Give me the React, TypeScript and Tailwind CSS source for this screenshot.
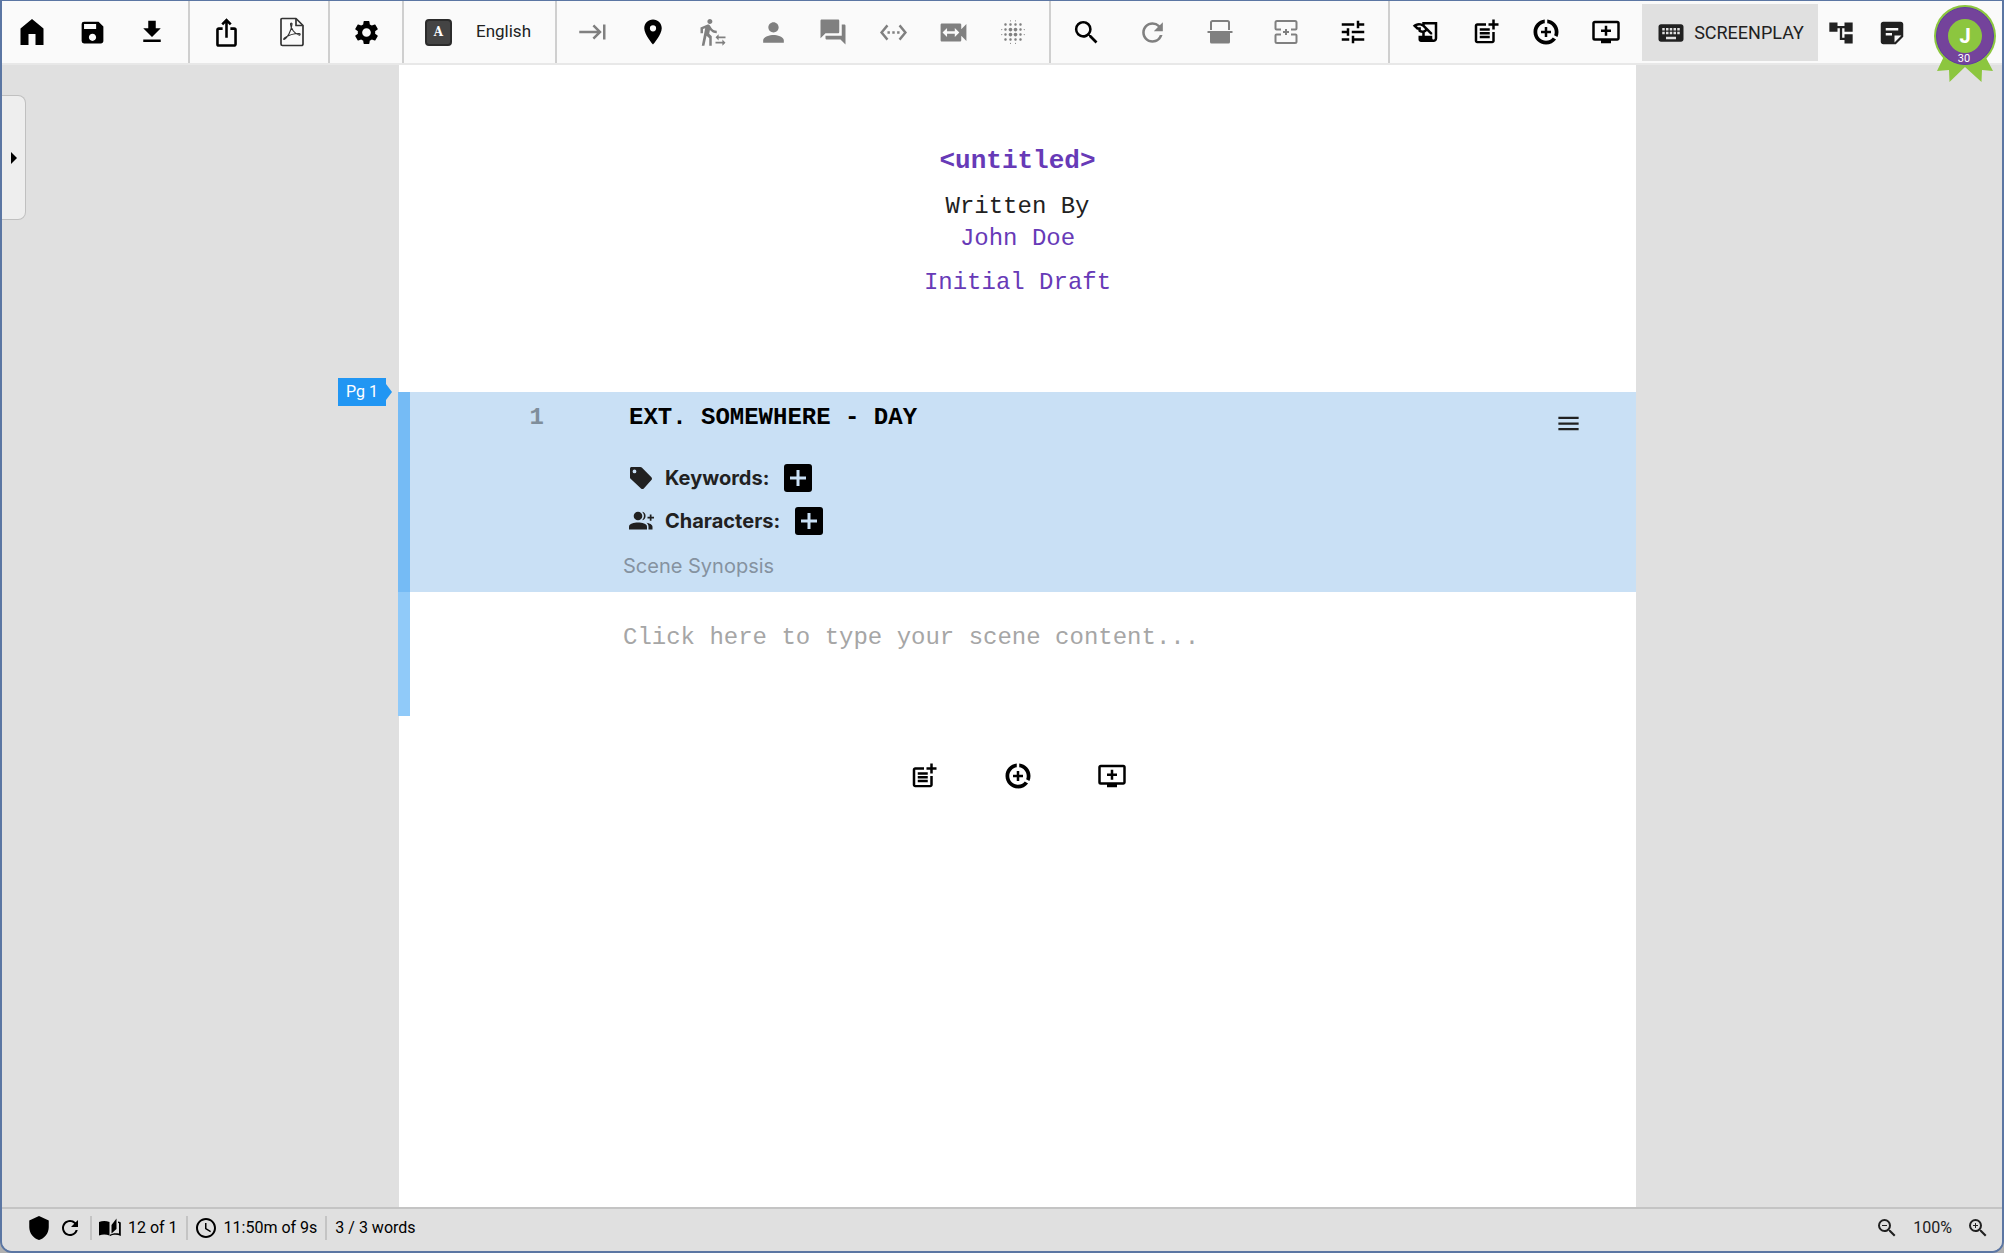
import type { ReactNode } from "react";
import {
    MdAccountTree,
    MdAddToQueue,
    MdBlurOn,
    MdDataSaverOn,
    MdDownload,
    MdForum,
    MdHistoryEdu,
    MdIosShare,
    MdKeyboard,
    MdKeyboardTab,
    MdMenu,
    MdPerson,
    MdPlace,
    MdPostAdd,
    MdRefresh,
    MdSave,
    MdSchedule,
    MdSearch,
    MdSettings,
    MdSettingsEthernet,
    MdShield,
    MdStickyNote2,
    MdSwitchVideo,
    MdTransferWithinAStation,
    MdTune,
    MdZoomIn,
    MdZoomOut,
} from "react-icons/md";

const HomeIcon = () => (
    <svg viewBox="0 0 28 28" className="size-7" fill="currentColor">
        <path d="M14 1 25.500 10.500V27h-8V16h-7v11h-8V10.500Z" />
    </svg>
);

const PdfIcon = () => (
    <svg viewBox="0 0 28 30" className="h-[30px] w-7" fill="none" stroke="#333" strokeWidth="1.700" strokeLinejoin="round">
        <path d="M4 1.500h14l7 7V27a1.500 1.500 0 0 1-1.500 1.500h-19A1.500 1.500 0 0 1 3 27V2.500a1 1 0 0 1 1-1Z" />
        <path d="M18 2v6.500h6.500" />
        <path strokeWidth="1.200" d="M6 22.500c3-1.200 7.500-8.500 8-15.500.1-1.200-1.500-1.200-1.500 0 .2 5 4.500 10 8.500 11 1.500.3 1.500-1.500 0-1.500-5 0-11 2-14.500 4.500-1 .8-.8 1.600-.5 1.500Z" />
    </svg>
);

const LanguageIcon = () => (
    <span className="flex size-[27px] items-center justify-center rounded border-2 border-[#2b2b2b] bg-[#444] font-['DejaVu_Serif',serif] text-xs font-bold leading-none text-white">
        A
    </span>
);

const SynopsisIcon = () => (
    <svg viewBox="0 0 26 26" className="size-[26px]" fill="none" stroke="currentColor" strokeWidth="2">
        <path d="M4 11V3.500A1.500 1.500 0 0 1 5.500 2h15A1.500 1.500 0 0 1 22 3.500V11" />
        <path d="M.5 13h25" />
        <path fill="currentColor" stroke="none" d="M3 14h20v9a1.500 1.500 0 0 1-1.500 1.500h-17A1.500 1.500 0 0 1 3 23Z" />
    </svg>
);

const PageBreakIcon = () => (
    <svg viewBox="0 0 26 26" className="size-[26px]" fill="none" stroke="currentColor" strokeWidth="2">
        <path d="M8 10.500H3.500a1 1 0 0 1-1-1V3.500A1.500 1.500 0 0 1 4 2h18a1.500 1.500 0 0 1 1.500 1.500v6a1 1 0 0 1-1 1H18" />
        <path d="M8 15.500H3.500a1 1 0 0 0-1 1v6A1.500 1.500 0 0 0 4 24h18a1.500 1.500 0 0 0 1.500-1.500v-6a1 1 0 0 0-1-1H18" />
        <path d="M13 10v6M10 13h6" />
    </svg>
);

const TagIcon = () => (
    <svg viewBox="0 0 24 24" className="size-6" fill="currentColor">
        <path fillRule="evenodd" d="M2.500 1h8.800c.6 0 1.100.2 1.500.6l9.600 9.600c.8.800.8 2 0 2.800l-7.600 8.400c-.8.800-2 .8-2.800 0L1.600 12.800A2 2 0 0 1 1 11.400V2.500C1 1.700 1.700 1 2.500 1ZM5.500 3.500a1.900 1.900 0 1 0 0 3.800 1.900 1.900 0 0 0 0-3.800Z" />
    </svg>
);

const PeopleAddIcon = () => (
    <svg viewBox="0 0 26 20" className="h-5 w-[26px]" fill="currentColor">
        <circle cx="9" cy="5" r="4.300" />
        <path d="M0 18.500v-2.800C0 12.500 5 11.500 9 11.500s9 1 9 4.200v2.800Z" />
        <path d="M13.200.8a4.300 4.300 0 0 1 0 8.400 6.500 6.500 0 0 0 0-8.400ZM17.500 11.700c3 .6 6 1.700 6 4v2.800h-4v-2.800c0-1.700-.8-3-2-4Z" />
        <path d="M20.800 3.500h1.700v2.300H25v1.700h-2.500v2.300h-1.700V7.500h-2.300V5.800h2.300Z" />
    </svg>
);

const BookIcon = () => (
    <svg viewBox="0 0 24 20" className="h-5 w-6" fill="currentColor">
        <path d="M1 4c3.500-1.500 7-1.500 10.500 0v13.500C8 16 4.500 16 1 17.500Z" />
        <path d="M13.500 7 18.500.5V11l-5 4.500Z" />
        <path d="M20 3.500c1 .2 2 .5 2.800.9V18c-3.500-1.500-7.300-1.700-11 .3v-1.500c2.600-1.700 6-2 9.200-1.300V5.300l-1-.3Z" />
    </svg>
);

const Badge = () => (
    <svg viewBox="0 0 64 80" className="h-20 w-16" role="img" aria-label="J, 30">
        <path fill="#8cc63f" d="M13 48 4 67l12-1 .500 12L32 63l16.500 15 .500-12 11 1-10-19Z" />
        <circle cx="32" cy="32" r="31" fill="#8cc63f" />
        <circle cx="32" cy="32" r="28.500" fill="#74439b" stroke="#5f3ba0" />
        <circle cx="32" cy="32" r="17" fill="#8cc63f" />
        <text x="32" y="39" textAnchor="middle" fontSize="20" fontWeight="800" fill="#fff">J</text>
        <text x="31" y="58" textAnchor="middle" fontSize="11" fill="#fff">30</text>
    </svg>
);

const ToolButton = ({ label, wide, disabled, children }: { label: string; wide?: boolean; disabled?: boolean; children: ReactNode }) => (
    <button
        type="button"
        aria-label={label}
        disabled={disabled}
        className={`flex h-full shrink-0 items-center justify-center text-black disabled:text-[#808080] ${wide ? "w-[66px]" : "w-[60px]"}`}
    >
        {children}
    </button>
);

const ToolGroup = ({ className, children }: { className: string; children: ReactNode }) => (
    <div className={`flex h-full shrink-0 items-center border-r-2 border-[#cfcfcf] ${className}`}>{children}</div>
);

const Toolbar = () => (
    <header className="flex h-16 shrink-0 items-center border-b-2 border-[#e8e8e8] bg-[#fafafa]">
        <ToolGroup className="pr-1.5">
            <ToolButton label="Home"><HomeIcon /></ToolButton>
            <ToolButton label="Save"><MdSave size={29} /></ToolButton>
            <ToolButton label="Download"><MdDownload size={30} /></ToolButton>
        </ToolGroup>
        <ToolGroup className="px-[3px]">
            <ToolButton label="Export" wide><MdIosShare size={31} /></ToolButton>
            <ToolButton label="Export to PDF" wide><PdfIcon /></ToolButton>
        </ToolGroup>
        <ToolGroup className="px-[3px]">
            <ToolButton label="Settings" wide><MdSettings size={29} /></ToolButton>
        </ToolGroup>
        <ToolGroup className="w-[153px]">
            <button type="button" className="flex h-full w-full items-center gap-6 pl-[21px] text-[17px] text-[#212121]">
                <LanguageIcon />
                English
            </button>
        </ToolGroup>
        <ToolGroup className="px-1.5">
            <ToolButton label="Tab" disabled><MdKeyboardTab size={30} /></ToolButton>
            <ToolButton label="Scene heading"><MdPlace size={30} /></ToolButton>
            <ToolButton label="Action" disabled><MdTransferWithinAStation size={30} /></ToolButton>
            <ToolButton label="Character" disabled><MdPerson size={31} /></ToolButton>
            <ToolButton label="Dialogue" disabled><MdForum size={30} /></ToolButton>
            <ToolButton label="Parenthetical" disabled><MdSettingsEthernet size={29} /></ToolButton>
            <ToolButton label="Shot" disabled><MdSwitchVideo size={31} /></ToolButton>
            <ToolButton label="Transition" disabled><MdBlurOn size={30} /></ToolButton>
        </ToolGroup>
        <ToolGroup className="w-[339px] justify-between px-0.5">
            <ToolButton label="Search" wide><MdSearch size={31} /></ToolButton>
            <ToolButton label="Refresh" wide disabled><MdRefresh size={31} /></ToolButton>
            <ToolButton label="Synopsis" wide disabled><SynopsisIcon /></ToolButton>
            <ToolButton label="Page break" wide disabled><PageBreakIcon /></ToolButton>
            <ToolButton label="Options" wide><MdTune size={30} /></ToolButton>
        </ToolGroup>
        <div className="flex h-full items-center pl-1.5">
            <ToolButton label="Scriptalay"><MdHistoryEdu size={30} /></ToolButton>
            <ToolButton label="Add scene"><MdPostAdd size={30} /></ToolButton>
            <ToolButton label="Add act break"><MdDataSaverOn size={30} /></ToolButton>
            <ToolButton label="Add episode break"><MdAddToQueue size={30} /></ToolButton>
        </div>
        <nav className="ml-auto flex shrink-0 items-center self-start pt-[3px] text-[#212121]">
            <button type="button" aria-current="page" className="flex h-[57px] w-44 items-center justify-center gap-2 bg-[#e0e0e0] text-lg">
                <MdKeyboard size={30} />
                SCREENPLAY
            </button>
            <button type="button" aria-label="Structure" className="flex h-14 w-[46px] items-center justify-center"><MdAccountTree size={28} /></button>
            <button type="button" aria-label="Notebook" className="flex h-14 w-14 items-center justify-center"><MdStickyNote2 size={30} /></button>
            <button type="button" className="relative z-10 ml-[13px] mr-[5px] h-14 self-start"><Badge /></button>
        </nav>
    </header>
);

const AddButton = ({ label }: { label: string }) => (
    <button type="button" aria-label={label} className="ml-[7px] flex size-7 items-center justify-center rounded-[3px] bg-black text-[#c9e0f5]">
        <svg viewBox="0 0 16 16" className="size-4" stroke="currentColor" strokeWidth="3"><path d="M8 0v16M0 8h16" /></svg>
    </button>
);

const TitlePage = () => (
    <section className="flex flex-col items-center pb-[93px] pt-20 font-['Liberation_Mono',monospace] text-2xl leading-8 text-[#673ab7]">
        <h1 className="text-[26px] font-bold">&lt;untitled&gt;</h1>
        <p className="mt-3.5 text-[#212121]">Written By</p>
        <p>John Doe</p>
        <p className="mt-3">Initial Draft</p>
    </section>
);

const Scene = () => (
    <section className="relative -ml-px">
        <div className="absolute right-full top-[-14px] mr-1.5 flex items-center">
            <span className="flex h-7 w-12 items-center justify-center bg-[#2196f3] text-base text-white">Pg 1</span>
            <svg viewBox="0 0 6 16" className="h-4 w-1.5" fill="#2196f3"><path d="M0 0 6 8 0 16Z" /></svg>
        </div>
        <div className="flex h-[200px] border-l-[12px] border-[#75bbf5] bg-[#c9e0f5]">
            <div className="w-[134px] pt-2.5 text-right font-['Liberation_Mono',monospace] text-2xl font-bold leading-8 text-[#7f8e9b]">1</div>
            <div className="flex grow flex-col pl-[79px]">
                <input
                    aria-label="Scene heading"
                    defaultValue="EXT. SOMEWHERE - DAY"
                    className="mt-2.5 h-8 w-full bg-transparent pl-1.5 font-['Liberation_Mono',monospace] text-2xl font-bold text-black outline-none"
                />
                <div className="mt-[22px] flex h-[43px] items-center gap-2 pl-1.5 font-['Inter',sans-serif] text-xl font-bold text-[#212121]">
                    <span className="flex w-7"><TagIcon /></span>
                    Keywords:
                    <AddButton label="Add keyword" />
                </div>
                <div className="flex h-[43px] items-center gap-2 pl-1.5 font-['Inter',sans-serif] text-xl font-bold text-[#212121]">
                    <span className="flex w-7"><PeopleAddIcon /></span>
                    Characters:
                    <AddButton label="Add character" />
                </div>
                <input
                    aria-label="Scene synopsis"
                    placeholder="Scene Synopsis"
                    className="mt-1.5 h-9 w-full bg-transparent font-['Inter',sans-serif] text-xl outline-none placeholder:text-[#8592a0]"
                />
            </div>
            <button type="button" aria-label="Scene menu" className="mr-[53px] mt-4 flex size-[30px] items-center justify-center text-[#212121]">
                <MdMenu size={27} />
            </button>
        </div>
        <div className="flex border-l-[12px] border-[#90caf9]">
            <textarea
                aria-label="Scene content"
                placeholder="Click here to type your scene content..."
                className="ml-[213px] h-[124px] grow resize-none bg-transparent pt-[30px] font-['Liberation_Mono',monospace] text-2xl leading-8 outline-none placeholder:text-[#a6a6a6]"
            />
        </div>
    </section>
);

const StatusBar = () => (
    <footer className="flex h-11 shrink-0 items-center border-t-2 border-[#c4c4c4] bg-[#e0e0e0] pb-1 text-base text-black">
        <button type="button" aria-label="Vault" className="ml-6"><MdShield size={26} /></button>
        <button type="button" aria-label="Refresh statistics" className="ml-1.5"><MdRefresh size={24} /></button>
        <span className="ml-2 flex h-6 items-center gap-1.5 border-l-2 border-[#c4c4c4] pl-1.5">
            <BookIcon />
            12 of 1
        </span>
        <span className="ml-2 flex h-6 items-center gap-1.5 border-l-2 border-[#c4c4c4] pl-1.5">
            <MdSchedule size={24} />
            11:50m of 9s
        </span>
        <span className="ml-2 flex h-6 items-center border-l-2 border-[#c4c4c4] pl-2">3 / 3 words</span>
        <div className="ml-auto mr-3 flex items-center gap-3.5 text-[#212121]">
            <button type="button" aria-label="Zoom out"><MdZoomOut size={24} /></button>
            100%
            <button type="button" aria-label="Zoom in"><MdZoomIn size={24} /></button>
        </div>
    </footer>
);

export default function App() {
    return (
        <div className="h-screen bg-[#b0b0b0] font-['Roboto',sans-serif]">
            <div className="flex h-full flex-col overflow-hidden rounded-b-xl border-2 border-t border-[#5b76a3] bg-[#e0e0e0]">
                <Toolbar />
                <main className="grid grow grid-cols-[397fr_1237fr_366fr]">
                    <aside className="pt-[30px]">
                        <button
                            type="button"
                            aria-label="Show side panel"
                            className="flex h-[125px] w-6 items-center justify-center rounded-r-lg border border-l-0 border-[#c0c0c0] bg-[#eee]"
                        >
                            <svg viewBox="0 0 6 12" className="h-3 w-1.5"><path d="M0 0 6 6 0 12Z" /></svg>
                        </button>
                    </aside>
                    <article className="bg-white">
                        <TitlePage />
                        <Scene />
                        <div className="mt-[45px] flex justify-center gap-16">
                            <button type="button" aria-label="Add scene"><MdPostAdd size={30} /></button>
                            <button type="button" aria-label="Add act break"><MdDataSaverOn size={30} /></button>
                            <button type="button" aria-label="Add episode break"><MdAddToQueue size={30} /></button>
                        </div>
                    </article>
                </main>
                <StatusBar />
            </div>
        </div>
    );
}
